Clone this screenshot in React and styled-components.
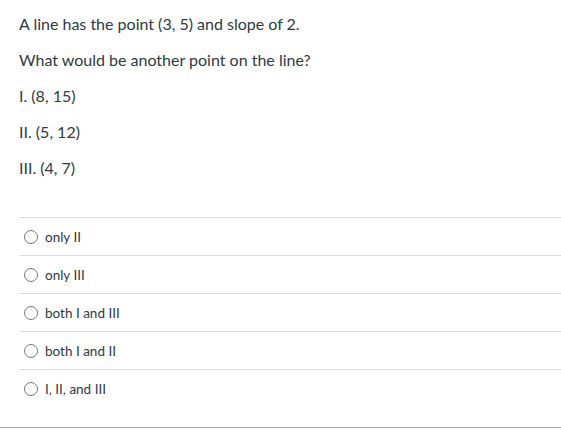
import React from 'react';
import styled, { createGlobalStyle } from 'styled-components';

const GlobalStyle = createGlobalStyle`
  body {
    margin: 0;
    background: #fff;
    font-family: Lato, "Open Sans", sans-serif;
    color: #2d3b45;
  }
`;

const Page = styled.div`
  width: 561px;
  height: 428px;
  display: flex;
  flex-direction: column;
  box-sizing: border-box;
  border-bottom: 1px solid #a8a8a8;
`;

const Question = styled.div`
  padding: 14px 0 0 19px;
  flex: 1;
`;

const Paragraph = styled.p`
  margin: 0 0 16px;
  font-size: 16px;
  line-height: 20px;
`;

const Answers = styled.div`
  margin: 0 0 20px 19px;
`;

const Answer = styled.label`
  display: flex;
  align-items: center;
  gap: 7px;
  height: 37px;
  padding-left: 5px;
  border-top: 1px solid #dcdcdc;
  font-size: 13.5px;
  cursor: pointer;
`;

const Radio = styled.span`
  width: 12px;
  height: 12px;
  border: 1px solid #777;
  border-radius: 50%;
  background: #fff;
  flex-shrink: 0;
`;

const statements = [
  'A line has the point (3, 5) and slope of 2.',
  'What would be another point on the line?',
  'I. (8, 15)',
  'II. (5, 12)',
  'III. (4, 7)',
];

const options = ['only II', 'only III', 'both I and III', 'both I and II', 'I, II, and III'];

const App = () => (
  <>
    <GlobalStyle />
    <Page>
      <Question>
        {statements.map((text) => (
          <Paragraph key={text}>{text}</Paragraph>
        ))}
      </Question>
      <Answers>
        {options.map((text) => (
          <Answer key={text}>
            <Radio />
            {text}
          </Answer>
        ))}
      </Answers>
    </Page>
  </>
);

export default App;
